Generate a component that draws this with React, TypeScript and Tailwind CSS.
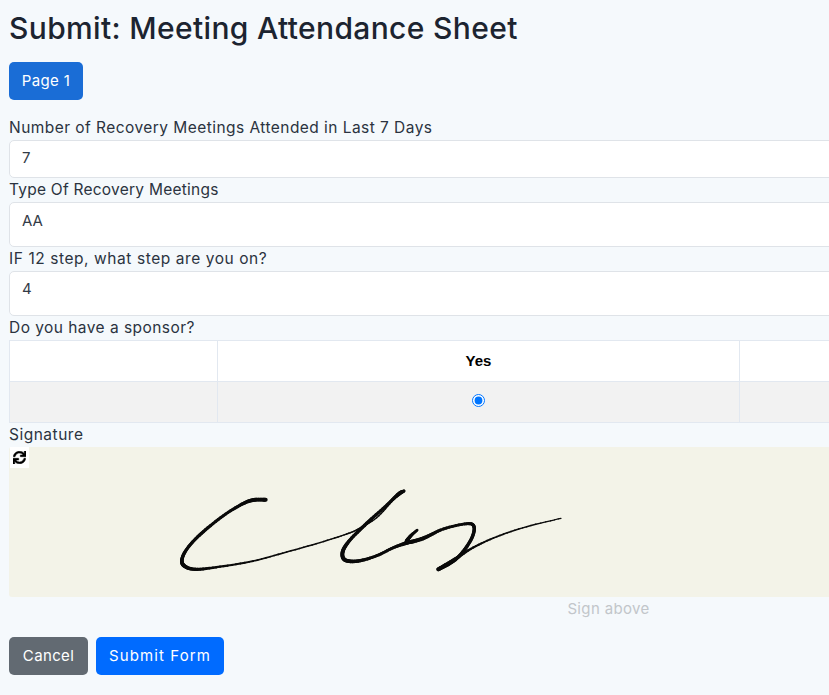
import { FaSync } from "react-icons/fa";

const labelClass = "block text-[15.5px] leading-[24px] text-[#2b3340]";
const inputClass =
	"block w-full rounded-[5px] border border-[#dfe3e8] bg-white px-3 text-[15px] text-[#333b47] font-['Inter',sans-serif] outline-none";

type Pt = [number, number, number];

// x, y, pen width, in page pixels
const strokes: Pt[][] = [
	[
		[265.7, 499.7, 4], [253.3, 500, 3.8], [241.7, 504.3, 3.3], [223.3, 515.7, 2.9], [203.3, 531.7, 3.2],
		[190, 545, 3.2], [182.7, 556.7, 3.4], [183.3, 565, 3.9], [195, 569.3, 3.4], [220, 566.7, 2.3], [253.3, 561, 1.8],
		[286.7, 552, 1.6], [320, 542.6, 1.5], [346.7, 534, 1.5], [358.3, 529, 1.5], [376.7, 517.7, 1.3],
		[393.3, 500, 1.6], [404, 491, 2.8],
	],
	[
		[404, 491, 2.8], [398.3, 494, 3.4], [385, 506.7, 2.9], [366.7, 523.3, 3.4], [350, 540, 3.4], [342.7, 551.7, 3.9],
		[345, 560, 3.9], [358.3, 561, 3.4], [376.7, 555.7, 2.9], [393.3, 547.7, 2.9], [408.3, 542.3, 3.9],
	],
	[
		[417.3, 530, 2.3], [410, 536.7, 3.4], [407.3, 542.3, 3.9], [423.3, 538.3, 3.9], [443.3, 529, 2.9], [466.7, 523.7, 2.9],
		[474, 526.7, 3.4], [471.7, 538.3, 3.4], [461.7, 553.3, 3.4], [451.7, 562.3, 3.4], [438.3, 569.3, 3.9],
	],
	[
		[438.3, 569.3, 3.9], [455, 559, 3.3], [473.3, 547.5, 2.2], [496.7, 536.7, 1.7], [526.7, 526.7, 1.5], [561, 518.3, 1.2],
	],
];

function sample(points: Pt[]) {
	const out: Pt[] = [];
	for (let i = 0; i < points.length - 1; i++) {
		const p0 = points[Math.max(i - 1, 0)];
		const p1 = points[i];
		const p2 = points[i + 1];
		const p3 = points[Math.min(i + 2, points.length - 1)];
		for (let s = 0; s < 8; s++) {
			const t = s / 8;
			const cr = (k: number) =>
				0.5 *
				(2 * p1[k] +
					(p2[k] - p0[k]) * t +
					(2 * p0[k] - 5 * p1[k] + 4 * p2[k] - p3[k]) * t * t +
					(3 * p1[k] - p0[k] - 3 * p2[k] + p3[k]) * t * t * t);
			out.push([cr(0), cr(1), p1[2] + (p2[2] - p1[2]) * t]);
		}
	}
	out.push(points[points.length - 1]);
	return out;
}

function Signature() {
	return (
		<svg width="420" height="100" viewBox="160 480 420 100" stroke="#0a0a0a" strokeLinecap="round" className="block">
			{strokes.map((stroke, i) =>
				sample(stroke)
					.slice(1)
					.map((p, j, rest) => {
						const prev = j === 0 ? stroke[0] : rest[j - 1];
						return <line key={`${i}-${j}`} x1={prev[0]} y1={prev[1]} x2={p[0]} y2={p[1]} strokeWidth={p[2]} />;
					}),
			)}
		</svg>
	);
}

function Field({ label, value, height, tracking }: { label: string; value: string; height: string; tracking: string }) {
	return (
		<div>
			<label className={`${labelClass} ${tracking}`}>{label}</label>
			<input readOnly value={value} className={`${inputClass} ${height}`} />
		</div>
	);
}

export default function App() {
	return (
		<div className="h-[695px] w-[829px] overflow-hidden bg-[#f5f9fc] font-['Inter',sans-serif]">
			<div className="w-[1199px] ml-[9px]">
				<h1 className="pt-[10px] text-[30px] leading-[36px] font-medium tracking-[0.35px] text-[#1c2430]">
					Submit: Meeting Attendance Sheet
				</h1>
				<button className="mt-[16px] h-[38px] w-[74px] rounded-[5px] bg-[#1a6dd6] text-[15px] tracking-[0.35px] text-white">
					Page 1
				</button>
				<div className="mt-[16px]">
					<Field label="Number of Recovery Meetings Attended in Last 7 Days" value="7" height="h-[38px] pb-[3px]" tracking="tracking-[0.45px]" />
					<Field label="Type Of Recovery Meetings" value="AA" height="h-[45px] pb-[9px]" tracking="tracking-[0.24px]" />
					<Field label="IF 12 step, what step are you on?" value="4" height="h-[45px] pb-[10px]" tracking="tracking-[0.57px]" />
					<label className={`${labelClass} tracking-[0.45px]`}>Do you have a sponsor?</label>
				</div>
				<table className="w-[1252px] table-fixed border-collapse border border-[#e2e8f0] font-['Liberation_Sans',sans-serif]">
					<tbody>
						<tr className="h-[41px] bg-white">
							<td className="w-[208px] border border-[#e2e8f0]" />
							<td className="w-[522px] border border-[#e2e8f0] text-center text-[15px] font-bold text-black">Yes</td>
							<td className="border border-[#e2e8f0]" />
						</tr>
						<tr className="h-[41px] bg-[#f2f2f2]">
							<td className="border border-[#e2e8f0]" />
							<td className="border border-[#e2e8f0] pb-[4px] text-center">
								<input type="radio" readOnly checked className="align-middle" />
							</td>
							<td className="border border-[#e2e8f0]" />
						</tr>
					</tbody>
				</table>
				<label className={`${labelClass} tracking-[0.5px]`}>Signature</label>
				<div className="relative h-[150px] rounded-[3px] bg-[#f3f3e8] pl-[151px] pt-[33px]">
					<div className="absolute left-[1px] top-0 flex h-[21px] w-[19px] items-center justify-center bg-white">
						<FaSync className="h-[13px] w-[13px] stroke-[20] text-black" />
					</div>
					<Signature />
				</div>
				<p className="mt-[1px] text-center text-[15px] leading-[22px] tracking-[0.35px] text-[#c2c6ca]">Sign above</p>
				<div className="mt-[17px] flex gap-[8px]">
					<button className="h-[38px] w-[79px] rounded-[5px] bg-[#626a72] text-[15px] tracking-[0.35px] text-white">Cancel</button>
					<button className="h-[38px] w-[128px] rounded-[5px] bg-[#006bff] text-[15px] tracking-[1.1px] text-white">Submit Form</button>
				</div>
			</div>
		</div>
	);
}
